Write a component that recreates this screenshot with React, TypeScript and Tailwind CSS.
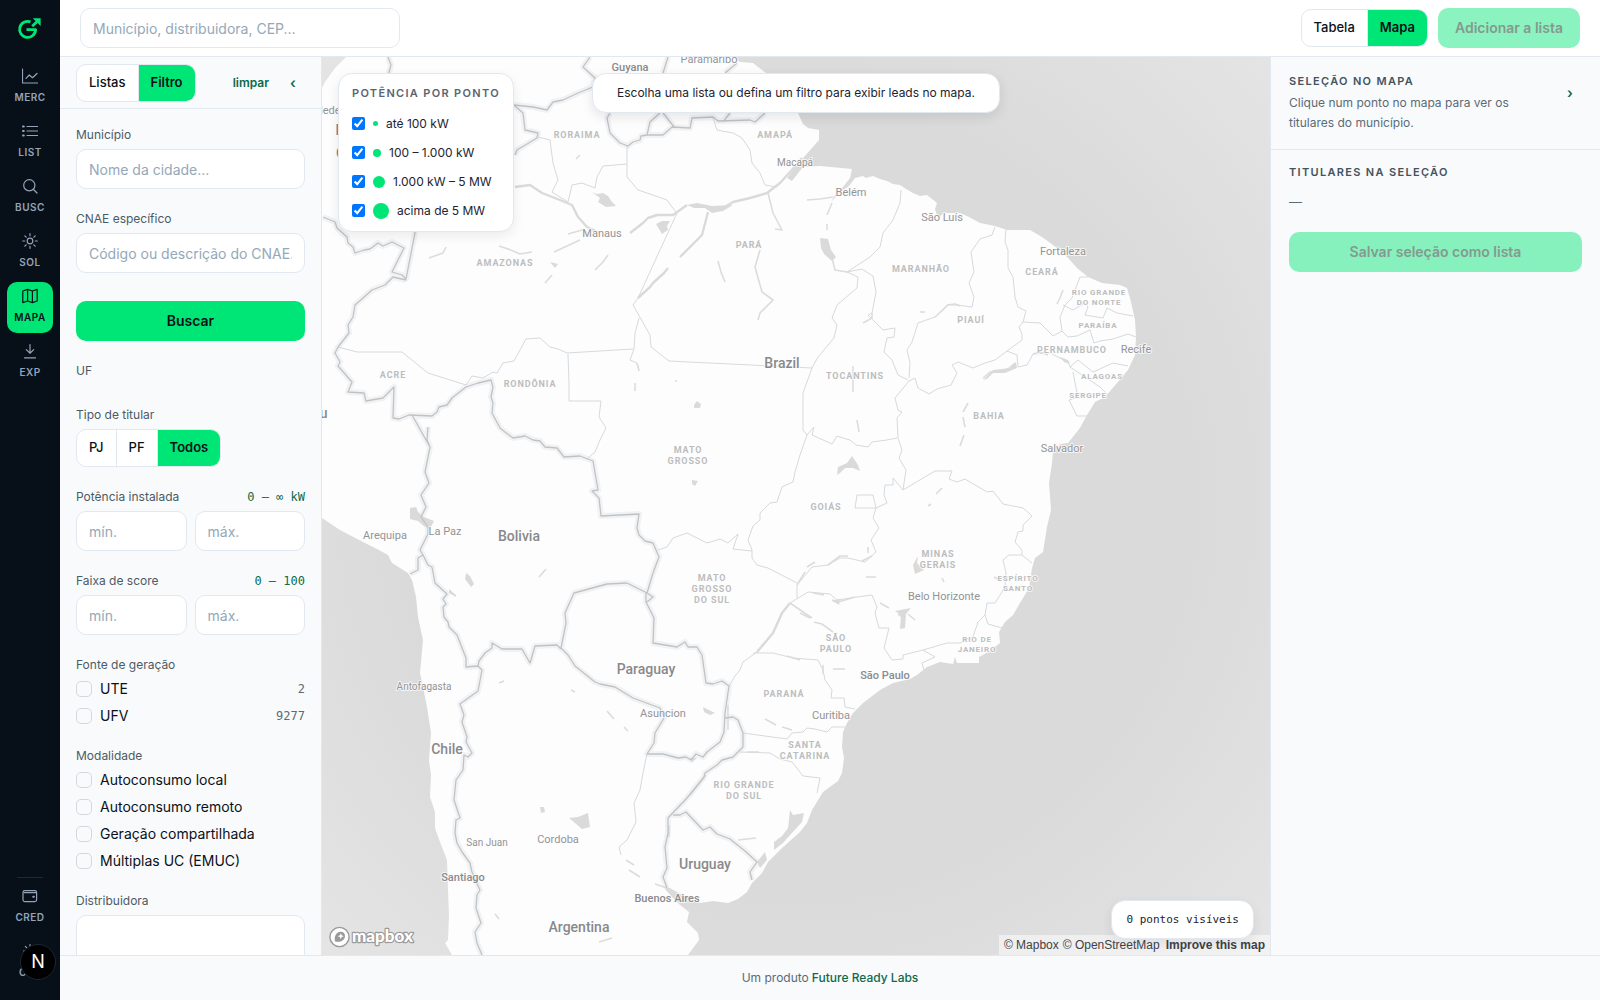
import React, { useState } from 'react';

const NAV = [
  { id: 'MERC', icon: <path d="M.5 1v14h15M4 10.3l3.3-3.3 3.2 2.7L15 5.5" /> },
  {
    id: 'LIST',
    icon: (
      <>
        <path d="M5 3.5h10.5M5 8h10.5M5 12.5h10.5" />
        <path d="M1 3.5h.8M1 8h.8M1 12.5h.8" strokeWidth="2" />
      </>
    ),
  },
  {
    id: 'BUSC',
    icon: (
      <>
        <circle cx="7.3" cy="7.3" r="5.6" />
        <path d="M11.5 11.5 15 15" />
      </>
    ),
  },
  {
    id: 'SOL',
    icon: (
      <>
        <circle cx="8" cy="8" r="2.8" />
        <path d="M8 .7v2M8 13.3v2M.7 8h2M13.3 8h2M2.8 2.8l1.4 1.4M11.8 11.8l1.4 1.4M2.8 13.2l1.4-1.4M11.8 4.2l1.4-1.4" />
      </>
    ),
  },
  { id: 'MAPA', icon: <path d="M.8 3l4.8-1.6 4.8 1.6 4.8-1.6V13l-4.8 1.6L5.6 13 .8 14.6zM5.6 1.4V13M10.4 3v11.6" /> },
  { id: 'EXP', icon: <path d="M8 1.5V10M4.3 6.6 8 10.2l3.7-3.6M2.5 14.8h11" /> },
];

const NAV_BOTTOM = [
  {
    id: 'CRED',
    icon: (
      <>
        <rect x="1" y="2.6" width="13.6" height="11" rx="1.8" />
        <path d="M2 4.6h12M11.2 8.8h.6" strokeWidth="1.1" />
        <path d="M11.3 8.8h.5" strokeWidth="2" />
      </>
    ),
  },
  {
    id: 'CFG',
    icon: (
      <>
        <circle cx="8" cy="8" r="2.6" />
        <path d="M8 1.5v2M8 12.5v2M1.5 8h2M12.5 8h2M3.4 3.4l1.4 1.4M11.2 11.2l1.4 1.4M3.4 12.6l1.4-1.4M11.2 4.8l1.4-1.4" />
      </>
    ),
  },
];

const BANDS = [
  { label: 'até 100 kW', dot: 'size-[5px]' },
  { label: '100 – 1.000 kW', dot: 'size-2' },
  { label: '1.000 kW – 5 MW', dot: 'size-3' },
  { label: 'acima de 5 MW', dot: 'size-4' },
];

const LAND =
  'M346 57H733L740 62 753 63 766 73 785 92 798 113 803 124 808 128 819 130 819 140 812 148 803 158 796 166 787 178 792 181 803 167 820 166 852 169 850 178 843 187 835 195 831 202 840 192 849 186 855 178 863 176 866 178 873 176 880 179 887 181 893 184 900 185 906 189 913 193 920 196 927 195 932 199 937 203 935 209 937 215 940 217 943 213 960 213 969 217 980 223 995 226 1007 230 1030 230 1042 237 1057 248 1068 258 1077 268 1088 277 1102 283 1120 285 1127 288 1131 302 1135 320 1136 337 1135 355 1128 370 1117 383 1105 397 1095 402 1087 415 1080 428 1068 443 1060 444 1053 452 1052 463 1049 483 1051 510 1047 527 1043 552 1035 558 1032 568 1029 588 1020 603 1013 615 1005 622 999 632 1000 643 988 652 979 657 979 663 957 663 955 657 953 664 940 662 927 667 917 675 910 679 893 683 880 690 863 703 853 713 847 723 843 732 842 747 844 758 842 773 838 781 823 792 812 810 807 823 800 832 782 848 768 862 762 873 752 883 747 892 738 899 728 903 713 901 700 903 686 897 668 887 664 888 672 897 680 905 689 912 687 922 698 933 699 940 688 955H452L445 943 448 940 449 915 448 890 447 860 440 842 435 828 435 812 430 797 431 775 429 760 431 733 427 707 423 687 420 673 423 640 418 617 416 597 412 580 408 573 392 563 388 555 377 549 363 542 340 530 322 518V88L325 82 335 68Z';

const COUNTRY_BORDERS = [
  'M323 217 335 222 337 228 347 237 348 243 353 247 355 253 364 250 370 249 378 243 383 246 392 242 404 248 392 272 402 275 406 279 415 233 418 190',
  'M406 280 393 277 385 285 372 290 355 305 353 317 348 325 349 333 338 347 335 353 340 362 338 366 352 382 348 392 364 393 366 401 383 398 394 387 393 418 399 419 409 415 432 416 437 412 439 407 447 405 452 398 466 387 478 383 491 380 493 387 491 397 493 403 492 413 500 428 505 432 513 438 525 436 533 440 540 441 545 447 557 448 564 457 580 456 593 461 598 490 592 491 599 498 601 516 639 514 637 528 639 535 645 541 653 543 659 557 653 573 647 593 653 597 647 602',
  'M647 593 627 583 607 584 574 593 565 613 566 623 561 648 568 655 575 666 595 682 600 684 615 687 633 698 660 708 664 718 655 733 654 743 647 754 663 754 678 758 686 757 691 760 696 754 703 757 707 752 720 742 724 732 725 713 729 686 722 681 713 684 706 683 702 655 697 647 688 647 685 642 677 647 653 643 654 618 646 602V593',
  'M725 718 733 717 738 720 743 733V747L733 757 722 760 717 765 705 773 704 777 687 798 668 818V833L665 847 667 868 663 877 667 888',
  'M673 815H680L686 812 703 830 710 827 717 834 730 839 745 851 757 862 750 872 752 880',
  'M412 415 430 447 425 472 429 483 421 495 426 507 421 517 428 527V534L420 550 423 555 418 558V570L410 574',
  'M428 427 427 440 430 447M423 555 428 565 432 567 435 583 447 594 443 599 446 604 443 607 444 617 448 622 449 627 457 635 466 658V667L478 666 479 661 482 657 485 653 492 648V643L502 649H522L530 663 535 646 557 645 561 649',
  'M478 666 482 670 478 691 460 704 464 715 462 722 467 737 466 742 472 753 468 757 464 755 463 770 456 780 454 800 460 818 456 820 455 833 457 843 462 852 470 863 472 872 480 890 477 895 476 908 481 923 475 932 477 943 482 955',
  'M515 155 517 150 522 147 537 138 538 133 525 130 523 113 514 105 533 107 547 110 553 102 563 100 578 93 593 87 595 78 583 67 590 57',
  'M610 113 607 118 610 133 620 143 628 146 633 142 640 140 641 136 647 135 663 135 672 127 690 128 692 118 713 117 718 121 750 120 755 122 765 113',
  'M668 57 663 73M647 135 650 122 660 113M675 128 663 113M737 63 725 73M723 122 730 113M388 57 391 65 388 76',
];

const STATE_BORDERS = [
  'M338 347 357 352H402L428 373 466 385 472 376 483 378 493 372 497 373 503 363 514 361 520 350 526 339 540 338 550 347 558 349 567 353 633 349',
  'M568 354 569 383V401H601L599 417 606 428 600 440 595 452 588 458',
  'M677 213 638 298 633 305 650 335 651 347 669 361 812 368M639 318 635 333 634 349 630 360 637 363 639 370',
  'M538 137 550 140 553 163 558 180 552 192 568 202 572 185 582 183 595 188 597 177 603 166 627 164V145M627 164V177L638 190 647 193 667 200 672 207 677 213',
  'M713 118 717 130 733 133 742 138 750 150 752 163 760 173 765 185 777 187',
  'M901 190 900 203 893 220 883 233 880 247 870 257 847 272 858 277 857 288 837 305 832 318 837 325 834 338 818 357 812 368 803 393V430L807 435 800 455 795 472 793 482 782 487 777 502 770 503 760 513V520L753 526 748 540 752 550V558L757 565 768 568 797 583',
  'M847 272 862 269 873 276 876 292 872 313 868 315 883 330 895 328 894 337 887 338 884 352 892 360 898 375 908 380',
  'M995 227 992 235 980 239 971 252 974 272 969 283 974 297 972 307 957 305 947 305 935 317 918 323 912 342 907 350 910 363 909 378',
  'M1006 230 1005 242 1008 250V268L1013 277 1015 297 1018 307 1026 311 1023 322 1019 327 1022 334V340L1007 351 995 360 985 363 973 368 958 362 952 365 957 373 951 385 937 389 929 394 918 388 915 378 909 381 895 398 898 410 902 412 897 418 898 438 902 450 899 458 906 470 903 490',
  'M807 435 814 427 812 435 832 444 837 436 843 438 850 440 856 445 868 447 872 442 887 440 897 438',
  'M1023 322 1040 323 1053 336 1062 331 1060 317 1065 305 1072 298 1080 277 1088 277M1063 305 1073 310 1085 303 1088 307 1085 315 1103 318 1107 308 1117 313 1133 316',
  'M1062 331 1068 337 1077 336 1090 330 1094 343 1100 341 1113 339 1128 334 1136 337M1007 351 1017 355 1018 367 1027 365 1033 354 1050 353 1068 362 1070 367 1078 360 1093 372 1113 363 1128 366',
  'M1070 367 1100 387 1108 395M1073 372 1075 383 1078 397 1069 400 1077 416 1087 416',
  'M903 490 893 478V485H885L884 495 887 503 876 508 873 518 879 528 871 540 876 552 865 562 848 558H840L828 565 812 567 797 585V598M857 495H873L876 508H855Z',
  'M658 550 667 547 673 538 687 533 707 543 720 539 728 543 738 534 733 549 752 551',
  'M903 490 935 471 952 471 949 479 957 482 965 479 987 492 993 491 1003 504 1023 508 1032 516 1023 525V531L1018 532 1015 542 1022 550V555L1032 563M1022 555H1009L1003 560 1006 573 1005 587 995 603H987L985 615 988 624 1002 628',
  'M985 615 978 622 973 637 960 643H947L923 650 903 655V659L892 660 884 648 889 628 879 628 875 613 877 607 872 595 857 597 837 600 830 594 808 592 790 603M923 650 935 657 922 663 924 670',
  'M790 603 782 613 773 633 757 652 743 662 740 670 735 676 729 686M753 653 773 653 793 658 818 660 823 670 825 680 832 690 831 698H844L845 707 855 709',
  'M743 733 787 739 792 733 803 732 807 728 815 729 827 732 832 727 845 727M740 752 770 753 780 759 792 762 803 776 820 778 817 793',
  'M647 754 643 773 640 790 634 803 636 822 627 840 619 847 621 855',
];

const RIVERS = [
  'M568 234 582 230 589 234M832 258 835 270 847 272',
  'M768 193 773 213 782 230 775 229M760 250 755 267 762 292 773 300 760 313 758 320M807 200 820 199 833 197M832 203 827 215M827 224v6',
  'M499 246 508 249 520 254 532 252M554 252 580 240M429 258 443 253 446 247M545 283 552 275M595 270 603 262 608 255M718 261 721 272 725 282M580 155l-4 4',
  'M983 378 990 372 1000 371 1008 369 1015 363M968 403 963 412M963 417 965 427M964 435 960 446M1033 354 1040 352 1048 355',
  'M947 305 955 304 960 306M935 317 947 306M920 312h5M872 313 872 318 863 323M853 366V392M857 420l2 12',
  'M807 567 815 562M828 565 840 556 848 556M862 561 872 556M868 547v6M797 585 805 572',
  'M790 603 812 618M800 613l10 5M814 622 822 624 833 632M813 593 824 595M832 600 838 602 855 597M880 603 889 608M898 614 904 618 902 628M908 614l7 6',
  'M787 656 800 660M823 665v9M833 669h12M765 719 776 725M782 727l10 3M747 752h12M866 577h10M728 705v25M669 825v12M706 775 690 795',
  'M738 840 756 838M599 942 612 938M629 870 640 877M626 860 634 865M655 884 667 888M495 914l4 5M539 577l7-8M499 683l5-2M571 690l4 2M607 711l7 8M624 727l4 4',
  'M936 494 942 488M928 506l3-2M1063 290l-3 8 -3 6M994 577l4 2M942 578l2 4M676 380v2M637 363l2 8M635 383v8',
];

// the Amazon, Tapajós and Paraná, wider than the rest
const MAIN_RIVERS = [
  'M515 187 530 185 542 193 560 200 572 205 578 217 587 227 600 233M630 233 643 223 648 218 657 215 673 215 687 205',
  'M723 208 733 202 750 198 767 193 780 183 790 172 802 158',
  'M708 212 702 235 693 244 680 257M668 268 664 273 653 283 650 287 638 298',
  'M790 603 782 613 773 633 757 652',
];

const LAKES = [
  'M410 508 416 507 418 512 424 517 434 521 430 529 424 526 418 521 410 519Z',
  'M820 238 828 239 831 250 836 257 832 261 824 254 821 248Z',
  'M592 192 597 194 603 193 608 196 612 202 616 206 606 207 598 202 600 198Z',
  'M687 205 697 203 712 206 733 205 723 211 712 213 705 208 694 208Z',
  'M656 224 662 221 670 221 667 226 668 230 662 234 659 229Z',
  'M569 818 578 817 588 813 590 827 582 829Z',
  'M540 807h4l1 5-4 1ZM466 573l4 3 4 8-3 3-6-8ZM449 589l7 6v2l-7-4Z',
  'M790 810 793 815 804 813 802 822 791 834 783 843 774 850 774 842 782 836 788 828 789 820Z',
  'M757 862 765 852 767 860 760 868Z',
  'M703 707 715 713 710 715 704 712ZM692 480 698 481 695 486 692 484ZM694 405 697 401 701 404 700 408 694 408Z',
  'M837 475 838 467 847 463 852 456 858 465 860 471 853 468 845 468 840 473Z',
  'M913 565 918 556 917 563 924 570 915 574ZM895 611 911 608 906 614 905 628 900 629 901 615Z',
  'M983 380 993 370 1010 368 1016 362 1017 368 1005 373 993 373 987 379Z',
  'M832 601 840 599 839 605 836 603ZM550 262l8 2-3 4ZM689 758h8l-5 4ZM1060 357l8 3 2 4-6-2Z',
];

type MapLabel = { t: string[]; x: number; y: number };

const STATES: MapLabel[] = [
  { t: ['RORAIMA'], x: 577, y: 138 },
  { t: ['AMAPÁ'], x: 775, y: 138 },
  { t: ['AMAZONAS'], x: 505, y: 266 },
  { t: ['PARÁ'], x: 749, y: 248 },
  { t: ['MARANHÃO'], x: 921, y: 272 },
  { t: ['CEARÁ'], x: 1042, y: 275 },
  { t: ['PIAUÍ'], x: 971, y: 323 },
  { t: ['ACRE'], x: 393, y: 378 },
  { t: ['RONDÔNIA'], x: 530, y: 387 },
  { t: ['TOCANTINS'], x: 855, y: 379 },
  { t: ['PERNAMBUCO'], x: 1072, y: 353 },
  { t: ['BAHIA'], x: 989, y: 419 },
  { t: ['MATO', 'GROSSO'], x: 688, y: 453 },
  { t: ['GOIÁS'], x: 826, y: 510 },
  { t: ['MINAS', 'GERAIS'], x: 938, y: 557 },
  { t: ['MATO', 'GROSSO', 'DO SUL'], x: 712, y: 581 },
  { t: ['SÃO', 'PAULO'], x: 836, y: 641 },
  { t: ['PARANÁ'], x: 784, y: 697 },
  { t: ['SANTA', 'CATARINA'], x: 805, y: 748 },
  { t: ['RIO GRANDE', 'DO SUL'], x: 744, y: 788 },
];

const SMALL_STATES: MapLabel[] = [
  { t: ['RIO GRANDE', 'DO NORTE'], x: 1099, y: 295 },
  { t: ['PARAÍBA'], x: 1098, y: 328 },
  { t: ['ALAGOAS'], x: 1102, y: 379 },
  { t: ['SERGIPE'], x: 1088, y: 398 },
  { t: ['ESPÍRITO', 'SANTO'], x: 1018, y: 581 },
  { t: ['RIO DE', 'JANEIRO'], x: 977, y: 642 },
];

const CITIES: MapLabel[] = [
  { t: ['Paramaribo'], x: 709, y: 63 },
  { t: ['Medellín'], x: 334, y: 114 },
  { t: ['Belém'], x: 851, y: 196 },
  { t: ['São Luís'], x: 942, y: 221 },
  { t: ['Fortaleza'], x: 1063, y: 255 },
  { t: ['Manaus'], x: 602, y: 237 },
  { t: ['Recife'], x: 1136, y: 353 },
  { t: ['Salvador'], x: 1062, y: 452 },
  { t: ['Arequipa'], x: 385, y: 539 },
  { t: ['La Paz'], x: 445, y: 535 },
  { t: ['Belo Horizonte'], x: 944, y: 600 },
  { t: ['Asuncion'], x: 663, y: 717 },
  { t: ['Curitiba'], x: 831, y: 719 },
  { t: ['Cordoba'], x: 558, y: 843 },
];

const SMALL_CITIES: MapLabel[] = [
  { t: ['Macapá'], x: 795, y: 166 },
  { t: ['Antofagasta'], x: 424, y: 690 },
  { t: ['San Juan'], x: 487, y: 846 },
];

const BIG_CITIES: MapLabel[] = [
  { t: ['Guyana'], x: 630, y: 71 },
  { t: ['São Paulo'], x: 885, y: 679 },
  { t: ['Santiago'], x: 463, y: 881 },
  { t: ['Buenos Aires'], x: 667, y: 902 },
];

const COUNTRIES: MapLabel[] = [
  { t: ['Bogotá'], x: 358, y: 135 },
  { t: ['Colombia'], x: 366, y: 158 },
  { t: ['Brazil'], x: 782, y: 368 },
  { t: ['Peru'], x: 313, y: 418 },
  { t: ['Bolivia'], x: 519, y: 541 },
  { t: ['Paraguay'], x: 646, y: 674 },
  { t: ['Chile'], x: 447, y: 754 },
  { t: ['Uruguay'], x: 705, y: 869 },
  { t: ['Argentina'], x: 579, y: 932 },
];

function Labels({ items, className, line = 11 }: { items: MapLabel[]; className: string; line?: number }) {
  return (
    <g className={className} textAnchor="middle" stroke="#fdfdfd" strokeWidth="2" strokeOpacity=".75" paintOrder="stroke" strokeLinejoin="round">
      {items.map((l) => (
        <text key={l.t.join(' ')}>
          {l.t.map((row, i) => (
            <tspan key={row} x={l.x} y={l.y + i * line}>
              {row}
            </tspan>
          ))}
        </text>
      ))}
    </g>
  );
}

function BaseMap() {
  return (
    <svg viewBox="322 57 948 898" preserveAspectRatio="xMidYMid slice" className="block size-full" role="img" aria-label="Mapa do Brasil">
      <defs>
        <radialGradient id="sea" gradientUnits="userSpaceOnUse" cx="796" cy="500" r="720">
          <stop offset="0.55" stopColor="#dadada" />
          <stop offset="1" stopColor="#e7e7e7" />
        </radialGradient>
      </defs>
      <rect x="322" y="57" width="948" height="898" fill="url(#sea)" />
      <path d={LAND} fill="#fdfdfd" />
      <g fill="none" strokeLinejoin="round">
        <path d={COUNTRY_BORDERS.join('')} stroke="#f1f2f4" strokeWidth="6" />
        <path d={STATE_BORDERS.join('')} stroke="#d5dade" strokeWidth="1" />
        <path d={RIVERS.join('')} stroke="#dcdcdc" strokeWidth="1.6" />
        <path d={MAIN_RIVERS.join('')} stroke="#dadada" strokeWidth="2.4" />
      </g>
      <path d={LAKES.join('')} fill="#dadada" />
      <path d={COUNTRY_BORDERS.join('')} fill="none" stroke="#c0c2c4" strokeWidth="1.3" strokeLinejoin="round" />
      <Labels items={STATES} className="fill-[#bcbdbf] font-[Roboto,sans-serif] text-[9px] font-bold tracking-widest" />
      <Labels items={SMALL_STATES} line={10} className="fill-[#bcbdbf] font-[Roboto,sans-serif] text-[8px] font-bold tracking-widest" />
      <Labels items={CITIES} className="fill-[#939497] font-[Roboto,sans-serif] text-[11px]" />
      <Labels items={SMALL_CITIES} className="fill-[#939497] font-[Roboto,sans-serif] text-[10px]" />
      <Labels items={BIG_CITIES} className="fill-[#8a8b8e] font-[Roboto,sans-serif] text-[11px] font-medium" />
      <Labels items={COUNTRIES} className="fill-[#88898c] font-[Roboto,sans-serif] text-[14px] font-medium" />
    </svg>
  );
}

function MapboxLogo() {
  return (
    <svg width="88" height="24" viewBox="0 0 88 24" aria-label="Mapbox" role="img">
      <circle cx="11.5" cy="12" r="9.6" fill="#fff" stroke="#9a9a9a" strokeWidth="1.4" />
      <path d="M7 16.5c-1-5 .8-9.500 5.500-9.800 3 0 4.600 2 4.500 4.600-.2 4.400-4.800 6.300-10 5.200z" fill="#9a9a9a" />
      <path d="M12.800 8.200l.9 2.100 2.100.9-2.100.9-.9 2.100-.9-2.100-2.100-.9 2.100-.9z" fill="#fff" />
      <text x="24" y="17" className="fill-white font-[Lato,sans-serif] text-[17px] font-black" stroke="#9a9a9a" strokeWidth="2.4" paintOrder="stroke" strokeLinejoin="round">
        mapbox
      </text>
    </svg>
  );
}

function Segmented({ options, value, onChange }: { options: string[]; value: string; onChange: (v: string) => void }) {
  return (
    <div className="flex h-[38px] w-fit overflow-hidden rounded-[10px] border border-[#e2e8f0] bg-white">
      {options.map((o, i) => (
        <button
          key={o}
          type="button"
          aria-pressed={o === value}
          onClick={() => onChange(o)}
          className={`px-3 text-[13px] text-[#0a1118] ${i > 0 ? 'border-l border-[#e2e8f0]' : ''} ${
            o === value ? 'bg-[#00e676] font-semibold' : 'font-medium'
          }`}
        >
          {o}
        </button>
      ))}
    </div>
  );
}

function NavItem({ id, icon, active }: { id: string; icon: React.ReactNode; active?: boolean }) {
  return (
    <a
      href={`#${id.toLowerCase()}`}
      className={`flex h-[51px] w-[46px] flex-col items-center gap-1.5 rounded-[10px] pt-1.5 ${
        active ? 'bg-[#00e676] text-[#0a1118]' : 'text-[#94a3b8]'
      }`}
    >
      <svg width="16" height="16" viewBox="0 0 16 16" fill="none" stroke="currentColor" strokeWidth="1.2" strokeLinecap="round" strokeLinejoin="round">
        {icon}
      </svg>
      <span className="text-[10px] leading-[15px] font-semibold tracking-wider">{id}</span>
    </a>
  );
}

const inputCls =
  'h-10 w-full min-w-0 rounded-[10px] border border-[#e2e8f0] bg-white px-3 text-sm text-[#0a1118] placeholder:text-[#94a8b8] outline-none';
const labelCls = 'block text-xs leading-5 text-[#4b5b66]';
const monoCls = 'font-["DejaVu_Sans_Mono",monospace]';

function RangeField({ id, label, hint }: { id: string; label: string; hint: string }) {
  return (
    <div role="group" aria-labelledby={id} className="space-y-1">
      <div className="flex items-center justify-between">
        <span id={id} className={labelCls}>{label}</span>
        <span className={`${monoCls} text-xs leading-5 text-[#0b6b4a]`}>{hint}</span>
      </div>
      <div className="flex gap-2">
        <input type="text" inputMode="numeric" placeholder="mín." aria-label={`${label} mín.`} className={inputCls} />
        <input type="text" inputMode="numeric" placeholder="máx." aria-label={`${label} máx.`} className={inputCls} />
      </div>
    </div>
  );
}

function CheckGroup({ title, items }: { title: string; items: { label: string; count?: number }[] }) {
  return (
    <fieldset>
      <legend className={`${labelCls} mb-1`}>{title}</legend>
      <div className="space-y-[7px]">
        {items.map((it) => (
          <label key={it.label} className="flex h-5 items-center gap-2 text-sm text-[#0a1118]">
            <input
              type="checkbox"
              className="size-4 shrink-0 appearance-none rounded-[5px] border border-[#d3d8dd] bg-[#f9fafc] checked:bg-[#00e676]"
            />
            <span className="flex-1">{it.label}</span>
            {it.count !== undefined && <span className={`${monoCls} text-xs text-[#5b6b76]`}>{it.count}</span>}
          </label>
        ))}
      </div>
    </fieldset>
  );
}

export default function App() {
  const [view, setView] = useState('Mapa');
  const [tab, setTab] = useState('Filtro');
  const [holder, setHolder] = useState('Todos');

  return (
    <div className="flex h-screen overflow-hidden bg-white font-[Inter,sans-serif] text-[#0a1118]">
      <nav className="flex w-[60px] shrink-0 flex-col items-center bg-[#071018] pb-3">
        <a href="#inicio" aria-label="Início" className="mt-[17px] mb-[21px]">
          <svg width="26" height="24" viewBox="18 18 26 24" fill="none" stroke="#00e676" strokeWidth="2.8">
            <path d="M31.5 22.9A8 8 0 1 0 36.6 30.6H27.5" strokeLinejoin="round" />
            <path d="M33.2 27.2 38.500 22.200" strokeWidth="2.8" />
            <path d="M33.8 19.200H41.600V27z" fill="#00e676" stroke="none" />
          </svg>
        </a>
        <div className="space-y-1">
          {NAV.map((n) => (
            <NavItem key={n.id} id={n.id} icon={n.icon} active={n.id === 'MAPA'} />
          ))}
        </div>
        <div className="mt-auto mb-1 h-px w-[26px] bg-[#1c2833]" />
        <div className="space-y-1">
          {NAV_BOTTOM.map((n) => (
            <NavItem key={n.id} id={n.id} icon={n.icon} />
          ))}
        </div>
      </nav>

      <div className="flex min-w-0 flex-1 flex-col">
        <header className="flex h-[57px] shrink-0 items-center justify-between border-b border-[#e2e8f0] px-5">
          <input type="search" aria-label="Busca" placeholder="Município, distribuidora, CEP..." className={`${inputCls} max-w-80`} />
          <div className="flex items-center gap-2.5">
            <Segmented options={['Tabela', 'Mapa']} value={view} onChange={setView} />
            <button type="button" disabled className="h-10 rounded-[10px] bg-[#8bf3c0] px-[17px] text-sm font-semibold whitespace-nowrap text-[#84998f]">
              Adicionar a lista
            </button>
          </div>
        </header>

        <div className="flex min-h-0 flex-1">
          <aside className="flex w-[262px] shrink-0 flex-col border-r border-[#e2e8f0] bg-[#f9fafc]">
            <div className="flex h-[52px] shrink-0 items-center border-b border-[#e2e8f0] px-4">
              <Segmented options={['Listas', 'Filtro']} value={tab} onChange={setTab} />
              <button type="button" className="ml-auto text-xs font-semibold text-[#0b6b4a]">limpar</button>
              <button type="button" aria-label="Recolher filtros" className="ml-3 w-6 text-center text-sm font-semibold text-[#0b6b4a]">‹</button>
            </div>
            <form className="min-h-0 flex-1 space-y-5 overflow-hidden px-4 pt-4" onSubmit={(e) => e.preventDefault()}>
              <div className="space-y-1">
                <label htmlFor="municipio" className={labelCls}>Município</label>
                <input id="municipio" type="text" placeholder="Nome da cidade..." className={inputCls} />
              </div>
              <div className="space-y-1">
                <label htmlFor="cnae" className={labelCls}>CNAE específico</label>
                <input id="cnae" type="text" placeholder="Código ou descrição do CNAE..." className={inputCls} />
              </div>
              <div className="pt-2">
                <button type="submit" className="h-10 w-full rounded-[10px] bg-[#00e676] text-sm font-semibold">Buscar</button>
              </div>
              <div className="pb-1">
                <span className={labelCls}>UF</span>
              </div>
              <div className="space-y-1">
                <span className={labelCls}>Tipo de titular</span>
                <Segmented options={['PJ', 'PF', 'Todos']} value={holder} onChange={setHolder} />
              </div>
              <RangeField id="potencia" label="Potência instalada" hint="0 – ∞ kW" />
              <RangeField id="score" label="Faixa de score" hint="0 – 100" />
              <CheckGroup title="Fonte de geração" items={[{ label: 'UTE', count: 2 }, { label: 'UFV', count: 9277 }]} />
              <CheckGroup
                title="Modalidade"
                items={[
                  { label: 'Autoconsumo local' },
                  { label: 'Autoconsumo remoto' },
                  { label: 'Geração compartilhada' },
                  { label: 'Múltiplas UC (EMUC)' },
                ]}
              />
              <div className="space-y-1">
                <label htmlFor="distribuidora" className={labelCls}>Distribuidora</label>
                <select id="distribuidora" multiple className="h-32 w-full rounded-[10px] border border-[#e2e8f0] bg-white" />
              </div>
            </form>
          </aside>

          <main className="relative min-w-0 flex-1 overflow-hidden bg-[#dcdcdc]">
            <BaseMap />

            <div className="absolute top-4 left-4 rounded-[14px] border border-[#e2e8f0] bg-white px-[13px] py-[11px] shadow-[0_4px_12px_rgba(15,23,42,0.08)]">
              <h2 className="mb-[13px] text-[11px] leading-4 font-semibold tracking-[0.12em] text-[#5b6472]">POTÊNCIA POR PONTO</h2>
              <div className="space-y-2.5">
                {BANDS.map((b) => (
                  <label key={b.label} className="flex h-[19px] items-center gap-2 text-xs text-[#1c2430]">
                    <input type="checkbox" defaultChecked className="size-[13px]" />
                    <span className={`${b.dot} rounded-full bg-[#00e676]`} />
                    {b.label}
                  </label>
                ))}
              </div>
            </div>

            <div className="absolute inset-x-0 top-4 mx-auto w-fit rounded-[14px] border border-[#e2e8f0] bg-white px-6 py-[9px] text-xs leading-5 text-[#1c2430] shadow-[0_4px_12px_rgba(15,23,42,0.1)]">
              Escolha uma lista ou defina um filtro para exibir leads no mapa.
            </div>

            <a href="#mapbox" className="absolute bottom-1.5 left-1.5">
              <MapboxLogo />
            </a>
            <div className="absolute right-0 bottom-0 flex h-5 items-center gap-1 bg-white/50 px-[5px] font-['Liberation_Sans',sans-serif] text-xs text-[#404247]">
              <a href="#mapbox">© Mapbox</a>
              <a href="#osm">© OpenStreetMap</a>
              <a href="#improve" className="ml-0.5 font-bold">Improve this map</a>
            </div>
            <div className={`absolute right-4 bottom-4 rounded-[14px] border border-[#e2e8f0] bg-white px-3.5 text-[11px] leading-[37px] text-[#1c2430] shadow-[0_4px_12px_rgba(15,23,42,0.08)] ${monoCls}`}>
              0 pontos visíveis
            </div>
          </main>

          <aside className="w-[330px] shrink-0 border-l border-[#e2e8f0] bg-[#f9fafc]">
            <div className="flex items-center justify-between border-b border-[#e2e8f0] px-[18px] py-4">
              <div className="max-w-60">
                <h2 className="text-[11px] leading-4 font-semibold tracking-[0.12em] text-[#44535e]">SELEÇÃO NO MAPA</h2>
                <p className="mt-1 text-xs leading-5 text-[#5b6b76]">Clique num ponto no mapa para ver os titulares do município.</p>
              </div>
              <button type="button" aria-label="Recolher painel" className="mb-5 w-6 text-center text-sm font-semibold text-[#0b6b4a]">›</button>
            </div>
            <div className="px-[18px] py-3.5">
              <h2 className="text-[11px] leading-4 font-semibold tracking-[0.12em] text-[#44535e]">TITULARES NA SELEÇÃO</h2>
              <p className="mt-3 text-[13px] leading-5 text-[#5b6b76]">—</p>
              <button type="button" disabled className="mt-5 h-10 w-full rounded-[10px] bg-[#87f1be] text-sm font-semibold text-[#84998f]">
                Salvar seleção como lista
              </button>
            </div>
          </aside>
        </div>

        <footer className="flex h-[45px] shrink-0 items-center justify-center gap-[3px] border-t border-[#e2e8f0] bg-[#f9fafc] text-xs text-[#5b6b76]">
          Um produto
          <a href="#frl" className="font-medium text-[#0b6b4a]">Future Ready Labs</a>
        </footer>
      </div>

      <button
        type="button"
        aria-label="Next.js"
        className="fixed bottom-5 left-5 size-9 rounded-full border border-[#1d2731] bg-black text-lg text-white"
      >
        N
      </button>
    </div>
  );
}
